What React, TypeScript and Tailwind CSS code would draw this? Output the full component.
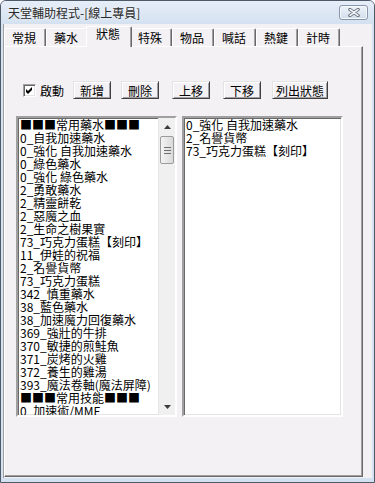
const TABS = ['常規', '藥水', '狀態', '特殊', '物品', '喊話', '熱鍵', '計時'];

const LEFT_ITEMS = [
  '■■■常用藥水■■■',
  '0_自我加速藥水',
  '0_強化 自我加速藥水',
  '0_綠色藥水',
  '0_強化 綠色藥水',
  '2_勇敢藥水',
  '2_精靈餅乾',
  '2_惡魔之血',
  '2_生命之樹果實',
  '73_巧克力蛋糕【刻印】',
  '11_伊娃的祝福',
  '2_名譽貨幣',
  '73_巧克力蛋糕',
  '342_慎重藥水',
  '38_藍色藥水',
  '38_加速魔力回復藥水',
  '369_強壯的牛排',
  '370_敏捷的煎鮭魚',
  '371_炭烤的火雞',
  '372_養生的雞湯',
  '393_魔法卷軸(魔法屏障)',
  '■■■常用技能■■■',
  '0_加速術/MME',
];

const RIGHT_ITEMS = ['0_強化 自我加速藥水', '2_名譽貨幣', '73_巧克力蛋糕【刻印】'];

const BUTTONS = [
  { label: '新增', cls: 'ml-[9px] w-[38px]' },
  { label: '刪除', cls: 'ml-[10px] w-[38px]' },
  { label: '上移', cls: 'ml-[13px] w-[38px]' },
  { label: '下移', cls: 'ml-[13px] w-[38px]' },
  { label: '列出狀態', cls: 'ml-[11px] w-[56px]' },
];

function CloseButton() {
  return (
    <div className="w-[29px] h-[15px] rounded-[3px] border border-[#8796ab] bg-gradient-to-b from-[#eef3f9] to-[#d2ddeb] flex items-center justify-center shadow-[inset_0_0_0_1px_#f6f9fc]">
      <svg width="12" height="9" viewBox="0 0 12 9">
        <path d="M2 1.5 L10 7.5 M10 1.5 L2 7.5" stroke="#5d6673" strokeWidth="3.4" strokeLinecap="round" />
        <path d="M2 1.5 L10 7.5 M10 1.5 L2 7.5" stroke="#eef1f5" strokeWidth="1.6" strokeLinecap="round" />
      </svg>
    </div>
  );
}

function Tab({ label, active }: { label: string; active: boolean }) {
  if (active) {
    return (
      <div className="relative z-10 -mx-[2px] -mb-[1px] w-[46px] h-[21px] flex items-start pl-[9px] bg-[#f4f1f4] border-t border-l border-t-white border-l-white border-r border-r-[#696969] shadow-[inset_-1px_0_0_#a0a0a0] rounded-t-[2px] leading-[13px]">
        {label}
      </div>
    );
  }
  return (
    <div className="w-[42px] h-[18px] flex items-center pl-[7px] border-t border-l border-t-white border-l-white border-r border-r-[#696969] shadow-[inset_-1px_0_0_#a0a0a0] rounded-t-[2px] leading-[13px]">
      {label}
    </div>
  );
}

function Checkbox() {
  return (
    <div className="w-[13px] h-[13px] bg-white border border-t-[#a0a0a0] border-l-[#a0a0a0] border-r-white border-b-white shadow-[inset_1px_1px_0_#696969,inset_-1px_-1px_0_#e3e3e3] flex items-center justify-center">
      <svg width="7" height="7" viewBox="0 0 7 7">
        <path d="M0 2 L2 4 L6 0 L6 3 L2 7 L0 5 Z" fill="#000" />
      </svg>
    </div>
  );
}

function Scrollbar() {
  return (
    <div className="w-[17px] h-full flex flex-col bg-[#f0f0f0] border-l border-l-[#e6e6e6]">
      <div className="h-[17px] flex items-center justify-center">
        <svg width="7" height="4" viewBox="0 0 7 4"><polygon points="3.5,0 7,4 0,4" fill="#3c3c3c" /></svg>
      </div>
      <div className="mt-[1px] mx-[1px] h-[28px] rounded-[2px] border border-[#9c9c9c] bg-gradient-to-r from-[#f3f3f3] to-[#dadada] flex flex-col items-center justify-center gap-[2px]">
        <div className="w-[7px] h-[1px] bg-[#6d6d6d]" />
        <div className="w-[7px] h-[1px] bg-[#6d6d6d]" />
        <div className="w-[7px] h-[1px] bg-[#6d6d6d]" />
      </div>
      <div className="flex-1" />
      <div className="h-[17px] flex items-center justify-center">
        <svg width="7" height="4" viewBox="0 0 7 4"><polygon points="0,0 7,0 3.5,4" fill="#3c3c3c" /></svg>
      </div>
    </div>
  );
}

function ListBox({ items, scroll, cls }: { items: string[]; scroll?: boolean; cls: string }) {
  return (
    <div className={`w-[161px] h-[301px] bg-white border-2 border-t-[#a0a0a0] border-l-[#a0a0a0] border-r-white border-b-white shadow-[inset_1px_1px_0_#696969,inset_-1px_-1px_0_#e3e3e3] flex overflow-hidden ${cls}`}>
      <div className="flex-1 overflow-hidden pl-[2px]">
        {items.map((it, i) => (
          <div key={i} className="h-[13px] leading-[13px] whitespace-nowrap text-black">{it}</div>
        ))}
      </div>
      {scroll && <Scrollbar />}
    </div>
  );
}

export default function App() {
  return (
    <div
      className="w-[375px] h-[483px] border border-[#4f5a68] rounded-t-[6px] bg-[#d4e1f0] flex flex-col overflow-hidden text-[12px] text-black"
      style={{ fontFamily: '"Noto Sans CJK TC", "Noto Sans", sans-serif' }}
    >
      {/* title bar */}
      <div className="h-[23px] shrink-0 flex items-center justify-between pl-[7px] pr-[6px] bg-gradient-to-b from-[#e6eef8] to-[#d4e1f0]">
        <span className="text-[#2a2a2a] leading-[13px] [text-shadow:0_0_4px_#ffffff]">天堂輔助程式-[線上專員]</span>
        <CloseButton />
      </div>

      {/* client area */}
      <div className="flex-1 mx-[2px] mb-[4px] bg-[#f4f1f4] border-l border-l-[#a0a0a0] flex flex-col pr-[9px] pb-[1px]">
        <div className="h-[22px] shrink-0 flex items-end">
          {TABS.map((t, i) => (
            <Tab key={t} label={t} active={i === 2} />
          ))}
        </div>

        <div className="flex-1 border-t border-l border-t-white border-l-white border-r border-b border-r-[#696969] border-b-[#696969] shadow-[inset_-1px_-1px_0_#a0a0a0] flex flex-col">
          <div className="mt-[34px] h-[18px] flex items-center pl-[18px]">
            <Checkbox />
            <span className="ml-[4px] leading-[13px]">啟動</span>
            {BUTTONS.map((b) => (
              <div
                key={b.label}
                className={`h-[18px] flex items-center justify-center leading-[13px] bg-[#f4f1f4] border border-t-[#e3e3e3] border-l-[#e3e3e3] border-r-[#404040] border-b-[#404040] shadow-[inset_1px_1px_0_#ffffff,inset_-1px_-1px_0_#a0a0a0] ${b.cls}`}
              >
                {b.label}
              </div>
            ))}
          </div>

          <div className="mt-[17px] flex pl-[11px]">
            <ListBox items={LEFT_ITEMS} scroll cls="" />
            <ListBox items={RIGHT_ITEMS} cls="ml-[5px]" />
          </div>
        </div>
      </div>
    </div>
  );
}
